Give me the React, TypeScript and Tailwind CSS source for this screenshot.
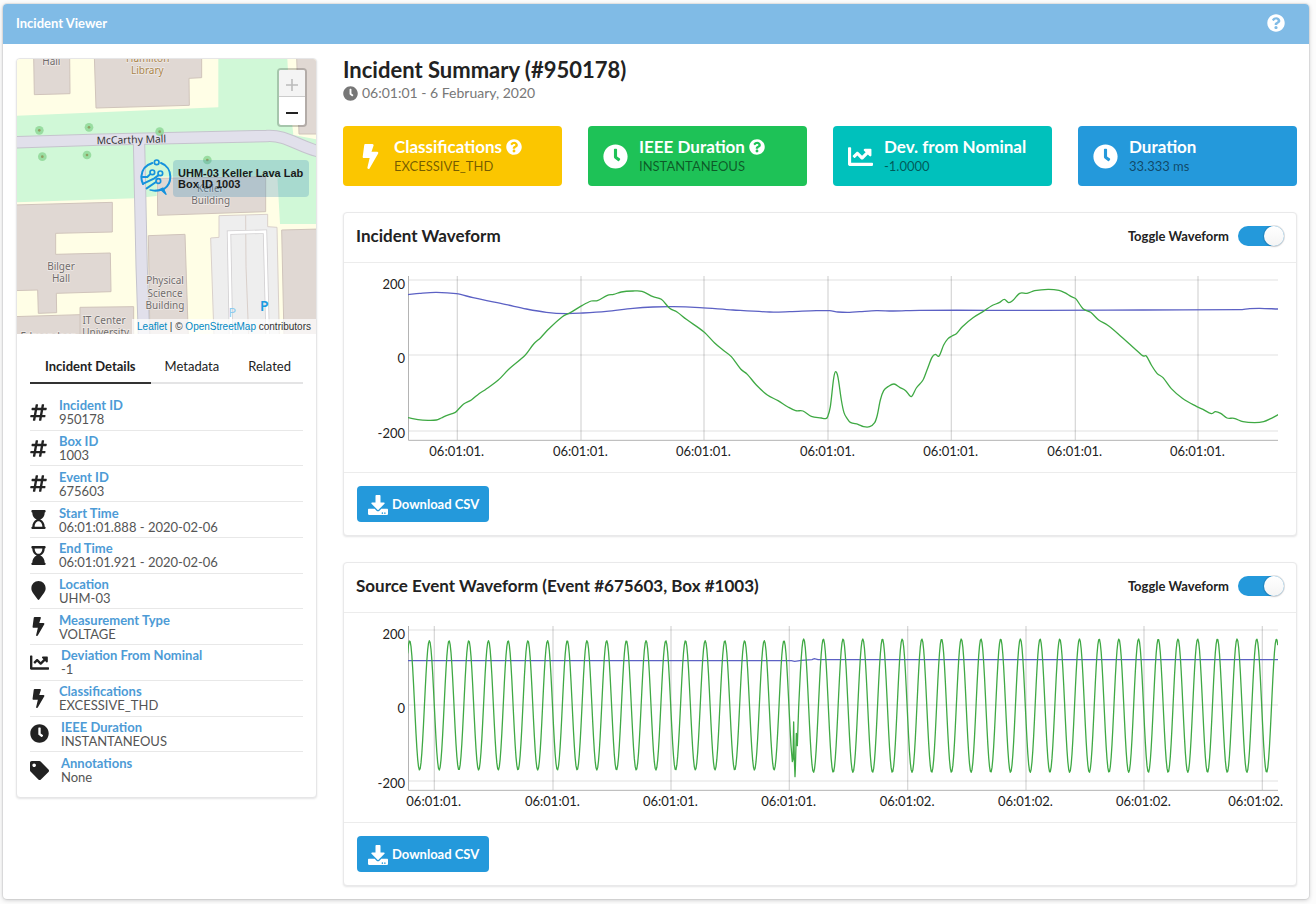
import { useState } from "react";
import type { ReactNode } from "react";
import type { IconType } from "react-icons";
import {
  FaBolt,
  FaChartLine,
  FaClock,
  FaDownload,
  FaHashtag,
  FaHourglassEnd,
  FaHourglassStart,
  FaMapMarker,
  FaQuestionCircle,
  FaTag,
} from "react-icons/fa";

type Point = [number, number];

/* ---------- Chart data, in a 2610 x 492 plot space ---------- */

const PLOT_W = 2610;
const PLOT_H = 492;

const shift = (points: Point[], dx: number, dy: number): Point[] =>
  points.map(([x, y]) => [x + dx, y + dy]);

const incidentVoltage: Point[] = [
  ...shift(
    [
      [205, 653], [235, 659], [265, 661], [290, 660], [305, 654], [320, 647], [347, 637], [357, 627],
      [372, 612], [395, 600], [418, 581], [437, 569], [475, 541], [508, 507], [557, 465], [582, 432],
      [603, 413], [627, 387], [668, 350], [692, 338], [728, 316], [755, 303], [773, 302], [803, 286],
      [822, 283], [845, 276], [880, 273], [907, 274], [940, 290], [965, 298], [990, 325], [1012, 336],
      [1040, 358], [1093, 396], [1125, 429], [1150, 450], [1175, 470], [1203, 507], [1223, 523],
      [1250, 555], [1283, 585], [1315, 602], [1345, 621], [1368, 632], [1390, 633], [1415, 649],
      [1445, 654],
    ],
    -205,
    -228,
  ),
  ...shift(
    [
      [48, 476], [54, 470], [62, 440], [72, 355], [78, 335], [85, 352], [95, 420], [103, 458],
      [112, 475], [122, 487], [145, 493], [162, 500], [180, 500], [195, 488], [203, 465], [212, 420],
      [222, 392], [235, 380], [253, 372], [270, 382], [288, 392], [302, 409], [308, 407], [320, 384],
      [340, 360], [352, 330], [367, 292], [377, 283], [388, 288], [402, 255], [415, 236], [427, 228],
      [440, 221], [458, 200], [490, 173], [523, 153], [545, 138], [570, 127], [584, 118], [597, 128],
      [610, 121], [630, 100], [652, 100], [675, 92], [715, 88], [748, 91], [765, 98], [785, 110],
      [798, 116], [820, 146], [843, 157], [867, 180], [893, 195], [925, 221], [995, 284], [1002, 288],
      [1010, 288], [1025, 315], [1042, 340], [1060, 353], [1085, 386], [1118, 415], [1160, 439],
      [1180, 448], [1205, 461], [1217, 455], [1233, 460], [1252, 474], [1273, 475], [1300, 485],
      [1335, 488], [1362, 485], [1385, 475], [1406, 464],
    ],
    1205,
    -48,
  ),
];

const incidentRms: Point[] = [
  [0, 56], [35, 52], [85, 49], [145, 53], [195, 65], [295, 86], [355, 99], [415, 109], [475, 113],
  [525, 111], [595, 106], [675, 97], [735, 93], [795, 92], [875, 95], [975, 102], [1085, 108],
  [1145, 107], [1225, 104], [1265, 104], [1290, 108], [1325, 109], [1355, 107], [1405, 104],
  [1455, 105], [1535, 103], [1905, 103], [2205, 102], [2495, 101], [2525, 98], [2555, 97], [2610, 99],
];

const PERIOD = 59.1;

function sine(from: number, to: number, mid: number, amp: number): Point[] {
  const out: Point[] = [];
  for (let x = from; x <= to; x += 2.5) {
    out.push([x, mid - amp * Math.cos(((x - 5) / PERIOD) * 2 * Math.PI)]);
  }
  return out;
}

const eventVoltage: Point[] = [
  ...sine(-1, 1151, 238, 194),
  [1153, 407], [1155, 400], [1157, 288], [1159, 400], [1161, 452], [1162, 430], [1165, 322],
  [1168, 359], [1170, 300],
  ...sine(1172, 2610, 239, 200),
];

const eventRms: Point[] = [
  [0, 104], [1150, 104], [1160, 106], [1180, 103], [1212, 101], [1219, 98], [1230, 101], [2610, 101],
];

function linePath(points: Point[]) {
  return points.map(([x, y], i) => `${i ? "L" : "M"}${x.toFixed(1)} ${y.toFixed(1)}`).join("");
}

function smoothPath(points: Point[]) {
  let d = `M${points[0][0]} ${points[0][1]}`;
  for (let i = 0; i < points.length - 1; i++) {
    const a = points[Math.max(i - 1, 0)];
    const b = points[i];
    const c = points[i + 1];
    const e = points[Math.min(i + 2, points.length - 1)];
    const h = (c[0] - b[0]) / 3;
    const s1 = (c[1] - a[1]) / Math.max(c[0] - a[0], 1);
    const s2 = (e[1] - b[1]) / Math.max(e[0] - b[0], 1);
    d += `C${b[0] + h} ${b[1] + s1 * h} ${c[0] - h} ${c[1] - s2 * h} ${c[0]} ${c[1]}`;
  }
  return d;
}

type Tick = { at: number; label: string; edge?: boolean };

const incidentTicks: Tick[] = [148, 519, 888, 1260, 1630, 2002, 2370].map((at) => ({
  at,
  label: "06:01:01.",
}));

const eventTicks: Tick[] = [
  { at: 79, label: "06:01:01." },
  { at: 435, label: "06:01:01." },
  { at: 789, label: "06:01:01." },
  { at: 1144, label: "06:01:01." },
  { at: 1499, label: "06:01:02." },
  { at: 1854, label: "06:01:02." },
  { at: 2208, label: "06:01:02." },
  { at: 2563, label: "06:01:02.", edge: true },
];

/* ---------- Chart ---------- */

function Chart({ ticks, green, blue }: { ticks: Tick[]; green: string; blue: string }) {
  return (
    <div className="flex pt-[13px] pr-[18px] pl-[13px]">
      <div className="relative w-[51px] shrink-0 text-[13px] leading-4 text-[#222]">
        <span className="absolute top-0 right-[3px]">200</span>
        <span className="absolute top-[74px] right-[3px]">0</span>
        <span className="absolute top-[149px] right-[3px]">-200</span>
      </div>
      <div className="min-w-0 flex-1">
        <svg
          className="block h-[165px] w-full"
          viewBox={`0 0 ${PLOT_W} ${PLOT_H + 3}`}
          preserveAspectRatio="none"
          fill="none"
        >
          <g stroke="#000" strokeOpacity="0.08" strokeWidth="4">
            {[12, 237, 465].map((y) => (
              <line key={y} x1="0" x2={PLOT_W} y1={y} y2={y} />
            ))}
          </g>
          <g stroke="#000" strokeOpacity="0.15" strokeWidth="4">
            {ticks.map((t) => (
              <line key={t.at} x1={t.at} x2={t.at} y1="0" y2={PLOT_H} />
            ))}
          </g>
          <path d={`M1.5 0V${PLOT_H + 1}H${PLOT_W}`} stroke="#b4b4b4" strokeWidth="3" />
          <path d={blue} stroke="#5c61c4" strokeWidth="1.3" vectorEffect="non-scaling-stroke" />
          <path d={green} stroke="#3fa944" strokeWidth="1.3" vectorEffect="non-scaling-stroke" strokeLinejoin="round" />
        </svg>
        <div className="relative h-[31px] text-[13px] leading-4 text-[#222]">
          {ticks.map((t) => (
            <span
              key={t.at}
              className={
                t.edge
                  ? "absolute top-[2px] w-14 -translate-x-[34px]"
                  : "absolute top-[2px] w-14 -translate-x-7"
              }
              style={{ left: `${(t.at / PLOT_W) * 100}%` }}
            >
              {t.label}
            </span>
          ))}
        </div>
      </div>
    </div>
  );
}

function WaveformPanel({ id, title, children }: { id: string; title: string; children: ReactNode }) {
  const [visible, setVisible] = useState(true);
  return (
    <section className="rounded border border-[#e9e9ea] bg-white shadow-[0_1px_2px_rgba(34,36,38,0.12)]">
      <header className="flex h-[50px] items-center justify-between border-b border-[#ececec] pr-3 pb-1 pl-3">
        <h3 className="text-[17px] leading-5 font-bold text-[#222]">{title}</h3>
        <div className="flex items-center gap-[9px]">
          <label htmlFor={id} className="text-[13px] leading-4 font-bold text-[#222]">
            Toggle Waveform
          </label>
          <input
            id={id}
            type="checkbox"
            checked={visible}
            onChange={(e) => setVisible(e.target.checked)}
            className="relative h-5 w-[46px] cursor-pointer appearance-none rounded-full bg-black/5 before:absolute before:top-0 before:left-0 before:size-5 before:rounded-full before:bg-linear-to-b before:from-white before:to-[#f4f4f4] before:shadow-[0_0_0_1px_rgba(34,36,38,0.12),0_1px_2px_rgba(34,36,38,0.15)] checked:bg-[#2499db] checked:before:left-[26px]"
          />
        </div>
      </header>
      {visible && children}
      <footer className="border-t border-[#ececec] p-[13px]">
        <button
          type="button"
          className="flex h-9 items-center gap-1 rounded bg-[#2499db] pt-[2px] pr-[10px] pl-[11px] text-[13px] font-bold text-white"
        >
          <FaDownload className="size-5" />
          Download CSV
        </button>
      </footer>
    </section>
  );
}

/* ---------- Map ---------- */

function CampusMap() {
  const trees: Point[] = [[118, 391], [267, 382], [479, 395], [127, 470], [261, 465], [622, 480]];
  return (
    <svg
      className="block h-full w-full"
      viewBox="51 177 897 825"
      preserveAspectRatio="xMidYMid slice"
      fontFamily='"Noto Sans", sans-serif'
      fontSize="30"
      textAnchor="middle"
    >
      <rect x="0" y="100" width="1100" height="1000" fill="#fffee6" />
      <path
        fill="#d0f8d7"
        d="M51 347 655 322V177H862L868 290 880 405 948 418V672H840L832 528 470 530V588L405 595 51 607Z"
      />
      <g fill="#e0d8d3" stroke="#d0c4bb" strokeWidth="3">
        <path d="M101 170H209L210 281 103 284Z" />
        <path d="M283 170H605V233L567 235 568 316 288 324Z" />
        <path d="M890 170H960V402H897Z" />
        <path d="M472 535 797 530V635L473 646Z" />
        <path d="M40 615 337 607V696L167 700V763L331 759 333 875 169 880 170 938 115 940 113 870 40 872Z" />
        <path d="M445 707 555 703 565 1010H450Z" />
        <path d="M40 950 240 944V922L401 920V1010H40Z" />
        <path d="M240 944V1010" />
        <path d="M845 690 960 687V1010H852Z" />
      </g>
      <path
        d="M657 647 803 643V680L831 682 838 1010H642L632 714 657 712Z"
        fill="#eeeeee"
        stroke="#d9d0cb"
        strokeWidth="3"
      />
      <path d="M737 646 738 800 746 1010" stroke="#d9cfca" strokeWidth="3" fill="none" />
      <g fill="none">
        <path d="M693 1010 687 698 795 695 803 1010" stroke="#d2d0d2" strokeWidth="13" />
        <path d="M693 1010 687 698 795 695 803 1010" stroke="#fff" strokeWidth="8" />
      </g>
      <g fill="none">
        <path d="M417 425 425 800 432 1010" stroke="#c5c4cd" strokeWidth="37" />
        <path d="M40 427 300 419 800 408C860 404 890 438 960 455" stroke="#c5c4cd" strokeWidth="37" />
        <path d="M417 425 425 800 432 1010" stroke="#e1e0eb" strokeWidth="31" />
        <path d="M40 427 300 419 800 408C860 404 890 438 960 455" stroke="#e1e0eb" strokeWidth="31" />
      </g>
      {trees.map(([x, y]) => (
        <g key={`${x}-${y}`}>
          <circle cx={x} cy={y} r="13" fill="#8fd898" fillOpacity="0.85" />
          <circle cx={x} cy={y} r="4" fill="#8f9f62" />
        </g>
      ))}
      <g fill="#6f6b6b" stroke="#f0ebe8" strokeWidth="4" paintOrder="stroke">
        <text x="154" y="196">Hall</text>
        <text x="183" y="811">Bilger</text>
        <text x="183" y="847">Hall</text>
        <text x="495" y="853">Physical</text>
        <text x="495" y="890">Science</text>
        <text x="495" y="927">Building</text>
        <text x="631" y="577">Keller</text>
        <text x="632" y="613">Building</text>
        <text x="312" y="973">IT Center</text>
        <text x="317" y="1009">University</text>
        <text x="146" y="1020">Edmondson</text>
      </g>
      <g fill="#a9844a" stroke="#f0ebe8" strokeWidth="4" paintOrder="stroke">
        <text x="443" y="187">Hamilton</text>
        <text x="442" y="221">Library</text>
      </g>
      <text x="394" y="430" fontSize="31" fill="#333" transform="rotate(-1.5 394 420)">
        McCarthy Mall
      </text>
      <text x="697" y="951" fontSize="38" fill="#8ecbee">P</text>
      <text x="793" y="933" fontSize="42" fontWeight="600" fill="#1a9be0">P</text>
    </svg>
  );
}

function BoxMarker() {
  return (
    <svg
      className="absolute top-[100px] left-[123px] h-[37px] w-8"
      viewBox="0 0 96 111"
      fill="none"
      stroke="#1592dd"
      strokeWidth="6"
      strokeLinecap="round"
    >
      <path d="M37 12C17 18 5 34 4 53c0 9 2 16 5 22" />
      <path d="M63 12c17 6 28 22 28 41 0 17-7 29-19 37" />
      <circle cx="50" cy="10" r="7" strokeWidth="5" />
      <path d="M30 93c10 4 22 4 34 0l14 13-9-19c-11 7-25 8-39 6Z" fill="#1592dd" strokeLinejoin="round" strokeWidth="4" />
      <circle cx="37" cy="40" r="7" strokeWidth="5" />
      <circle cx="61" cy="43" r="7" strokeWidth="5" />
      <circle cx="55" cy="66" r="7" strokeWidth="5" />
      <path d="M30 46 22 54H8" />
      <path d="M55 49 43 58 10 74" />
      <path d="M48 69 20 88" />
    </svg>
  );
}

/* ---------- Sidebar ---------- */

const details: { icon: IconType; label: string; value: string; wide?: boolean }[] = [
  { icon: FaHashtag, label: "Incident ID", value: "950178" },
  { icon: FaHashtag, label: "Box ID", value: "1003" },
  { icon: FaHashtag, label: "Event ID", value: "675603" },
  { icon: FaHourglassStart, label: "Start Time", value: "06:01:01.888 - 2020-02-06" },
  { icon: FaHourglassEnd, label: "End Time", value: "06:01:01.921 - 2020-02-06" },
  { icon: FaMapMarker, label: "Location", value: "UHM-03" },
  { icon: FaBolt, label: "Measurement Type", value: "VOLTAGE" },
  { icon: FaChartLine, label: "Deviation From Nominal", value: "-1", wide: true },
  { icon: FaBolt, label: "Classifications", value: "EXCESSIVE_THD" },
  { icon: FaClock, label: "IEEE Duration", value: "INSTANTANEOUS", wide: true },
  { icon: FaTag, label: "Annotations", value: "None", wide: true },
];

function Sidebar() {
  return (
    <aside className="w-[301px] shrink-0 overflow-hidden rounded border border-[#e6e6e7] bg-white shadow-[0_1px_2px_rgba(34,36,38,0.12)]">
      <div className="relative h-[275px] overflow-hidden">
        <CampusMap />
        <BoxMarker />
        <div className="absolute top-[101px] left-[156px] rounded bg-[#4b95be]/30 pt-2 pr-[6px] pb-[7px] pl-[5px] font-['Liberation_Sans',sans-serif] text-[11px] leading-[11px] font-bold whitespace-nowrap text-[#1a1a1a]">
          UHM-03 Keller Lava Lab
          <br />
          Box ID 1003
        </div>
        <div className="absolute top-[9px] right-[9px] flex w-[30px] flex-col overflow-hidden rounded border-2 border-black/20 bg-white bg-clip-padding">
          <button
            type="button"
            aria-label="Zoom in"
            disabled
            className="flex h-[27px] items-center justify-center border-b border-[#ccc] bg-[#f4f4f4] pt-1"
          >
            <svg viewBox="0 0 12 12" className="size-3" stroke="#bbb" strokeWidth="1.6">
              <path d="M6 0v12M0 6h12" />
            </svg>
          </button>
          <button type="button" aria-label="Zoom out" className="flex h-7 items-center justify-center pt-1">
            <svg viewBox="0 0 12 12" className="size-3" stroke="#222" strokeWidth="2">
              <path d="M0 6h12" />
            </svg>
          </button>
        </div>
        <div className="absolute right-0 bottom-0 bg-white/70 px-[5px] font-['Liberation_Sans',sans-serif] text-[10px] leading-[15px] whitespace-nowrap text-[#333]">
          <a href="#leaflet" className="text-[#0089c4]">Leaflet</a> | ©{" "}
          <a href="#osm" className="text-[#0089c4]">OpenStreetMap</a> contributors
        </div>
      </div>
      <div className="px-[13px] pt-[14px]">
        <nav className="flex border-b-2 border-[#e4e4e5] text-[13px] leading-4 text-[#222]">
          <button type="button" className="-mb-[2px] border-b-2 border-[#333] px-[15px] pt-[10px] pb-2 font-bold">
            Incident Details
          </button>
          <button type="button" className="px-[14px] pt-[10px] pb-2">Metadata</button>
          <button type="button" className="pt-[10px] pb-2 pl-[15px]">Related</button>
        </nav>
        <dl className="mt-[11px] mb-[9px] grid h-[393px] auto-rows-fr">
          {details.map(({ icon: Icon, label, value, wide }, i) => (
            <div
              key={i}
              className="flex items-center gap-3 border-b border-[#e8e8e8] last:border-b-0"
            >
              <span className={wide ? "flex w-[19px] justify-center text-[#222]" : "flex w-[17px] justify-center text-[#222]"}>
                <Icon className="size-[19px] shrink-0" />
              </span>
              <div className="text-[13px] leading-[14px]">
                <dt className="font-bold text-[#4d9bd6]">{label}</dt>
                <dd className="text-[#555]">{value}</dd>
              </div>
            </div>
          ))}
        </dl>
      </div>
    </aside>
  );
}

/* ---------- Summary ---------- */

const stats: { icon: IconType; title: string; value: string; help?: boolean; color: string }[] = [
  { icon: FaBolt, title: "Classifications", value: "EXCESSIVE_THD", help: true, color: "bg-[#fbc600]" },
  { icon: FaClock, title: "IEEE Duration", value: "INSTANTANEOUS", help: true, color: "bg-[#1ec257]" },
  { icon: FaChartLine, title: "Dev. from Nominal", value: "-1.0000", color: "bg-[#00c1bc]" },
  { icon: FaClock, title: "Duration", value: "33.333 ms", color: "bg-[#2499db]" },
];

export default function App() {
  return (
    <div className="min-h-screen bg-[#fcfcfc] pt-1 pr-[7px] pb-1 pl-[3px] font-[Lato,sans-serif]">
      <div className="rounded bg-white shadow-[0_0_0_1px_rgba(34,36,38,0.06),0_1px_4px_rgba(34,36,38,0.25)]">
        <header className="flex h-10 items-center justify-between rounded-t bg-[#80bbe6] pr-6 pb-[2px] pl-[13px] text-white">
          <h1 className="text-[13px] leading-4 font-bold">Incident Viewer</h1>
          <button type="button" aria-label="Help">
            <FaQuestionCircle className="size-[18px]" />
          </button>
        </header>
        <main className="flex items-start gap-[26px] pt-[14px] pr-3 pb-[13px] pl-[13px]">
          <Sidebar />
          <div className="min-w-0 flex-1">
            <h2 className="text-[22px] leading-6 font-bold text-[#222]">Incident Summary (#950178)</h2>
            <p className="flex items-center gap-1 text-[14px] leading-[22px] text-[#777]">
              <FaClock className="size-[15px]" />
              06:01:01 - 6 February, 2020
            </p>
            <div className="mt-[22px] grid grid-cols-4 gap-[26px]">
              {stats.map(({ icon: Icon, title, value, help, color }) => (
                <div key={title} className={`flex h-[60px] items-center rounded pl-[14px] ${color}`}>
                  <span className="flex w-[26px] justify-center text-white">
                    <Icon className="size-[25px] shrink-0" />
                  </span>
                  <div className="pl-[11px]">
                    <div className="flex items-center gap-1 text-[17px] leading-[21px] font-bold whitespace-nowrap text-white">
                      {title}
                      {help && <FaQuestionCircle className="size-4" />}
                    </div>
                    <div className="text-[13px] leading-[19px] text-black/55">{value}</div>
                  </div>
                </div>
              ))}
            </div>
            <div className="mt-[26px] flex flex-col gap-[26px]">
              <WaveformPanel id="toggle-incident" title="Incident Waveform">
                <Chart ticks={incidentTicks} green={smoothPath(incidentVoltage)} blue={smoothPath(incidentRms)} />
              </WaveformPanel>
              <WaveformPanel id="toggle-event" title="Source Event Waveform (Event #675603, Box #1003)">
                <Chart ticks={eventTicks} green={linePath(eventVoltage)} blue={linePath(eventRms)} />
              </WaveformPanel>
            </div>
          </div>
        </main>
      </div>
    </div>
  );
}
